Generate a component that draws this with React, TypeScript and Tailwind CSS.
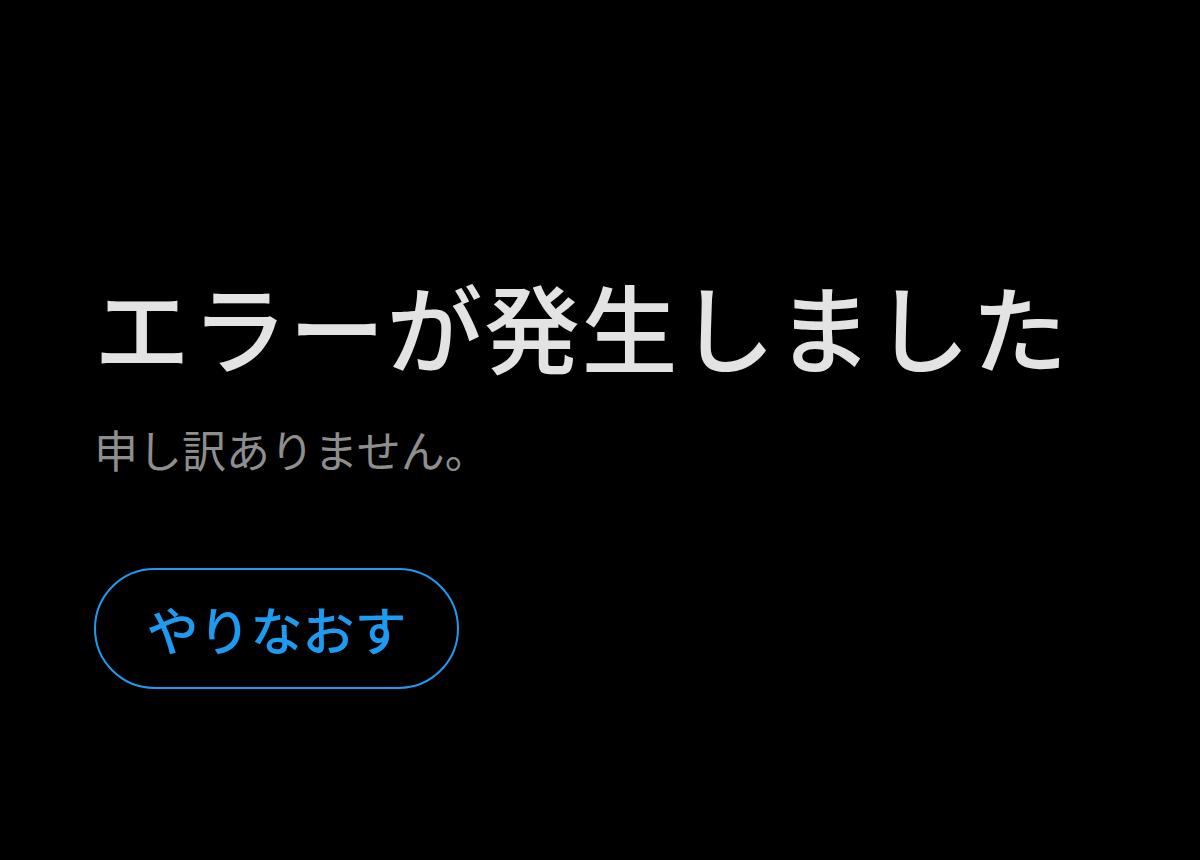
import React from "react";

export default function App() {
  return (
    <div
      className="w-[1200px] h-[860px] bg-black flex flex-col pl-[94px] pt-[265px]"
      style={{ fontFamily: '"Noto Sans CJK JP", "Noto Sans", sans-serif' }}
    >
      <h1 className="text-[96px] leading-[120px] font-medium text-[#e3e3e3] tracking-[1.5px]">
        エラーが発生しました
      </h1>
      <p className="mt-[34px] text-[44px] leading-[60px] text-[#8e8e8e]">
        申し訳ありません。
      </p>
      <div className="mt-[89px]">
        <button className="w-[365px] h-[121px] rounded-full border-2 border-[#1d9bf0] text-[#1d9bf0] text-[52px] font-medium flex items-center justify-center">
          やりなおす
        </button>
      </div>
    </div>
  );
}
